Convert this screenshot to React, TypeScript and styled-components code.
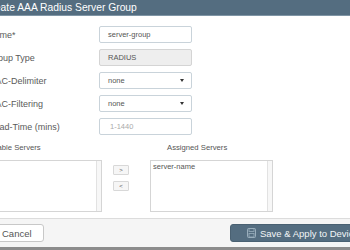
import React from "react";
import styled, { createGlobalStyle } from "styled-components";
import { RotateCcw } from "lucide-react";

const GlobalStyle = createGlobalStyle`
  html, body {
    margin: 0;
    padding: 0;
    background: #fff;
    overflow: hidden;
  }
  body {
    font-family: "Liberation Sans", Arial, sans-serif;
  }
`;

const Dialog = styled.div`
  width: 420px;
  margin-left: -24px;
  background: #fff;
  display: flex;
  flex-direction: column;
  height: 250px;
`;

const Header = styled.div`
  height: 15px;
  background: #546d80;
  border-bottom: 1px solid #7f95a5;
  color: #fff;
  font-size: 10.3px;
  line-height: 15px;
  padding-left: 8px;
  white-space: nowrap;
`;

const Form = styled.div`
  display: grid;
  grid-template-columns: 111px 93px;
  grid-auto-rows: 17px;
  row-gap: 6px;
  padding: 10px 0 0 12px;
  align-items: center;
`;

const Label = styled.div`
  font-size: 9px;
  color: #5a5a5a;
  white-space: nowrap;
`;

const Field = styled.div<{ $disabled?: boolean }>`
  box-sizing: border-box;
  height: 17px;
  border: 1px solid ${(p) => (p.$disabled ? "#d4d4d4" : "#c9d3da")};
  border-radius: 2px;
  background: ${(p) => (p.$disabled ? "#eeeeee" : "#fff")};
  display: flex;
  align-items: center;
  justify-content: space-between;
  padding: 0 7px 0 8px;
  font-size: 7.5px;
  color: #555;
`;

const Placeholder = styled.span`
  color: #aaa;
  padding-left: 2px;
`;

const Caret = styled.span`
  width: 0;
  height: 0;
  border-left: 2.5px solid transparent;
  border-right: 2.5px solid transparent;
  border-top: 3px solid #333;
`;

const Lists = styled.div`
  display: grid;
  grid-template-columns: 121px 48px 123px;
  padding-left: 5px;
  margin-top: 7px;
`;

const ListLabel = styled.div<{ $indent?: number }>`
  font-size: 7.7px;
  color: #555;
  height: 11px;
  line-height: 11px;
  padding-left: ${(p) => p.$indent || 0}px;
  margin-bottom: 7px;
  white-space: nowrap;
`;

const Column = styled.div`
  display: flex;
  flex-direction: column;
`;

const ListBox = styled.div`
  box-sizing: border-box;
  height: 52px;
  border: 1px solid #d5d5d5;
  border-right: none;
  display: grid;
  grid-template-columns: 1fr 6px;
  font-size: 7.5px;
  color: #555;
`;

const ListItems = styled.div`
  padding: 1px 2px;
`;

const Scroll = styled.div`
  border-left: 1px solid #e2e2e2;
  border-right: 1px solid #d5d5d5;
  background: #f7f7f7;
`;

const MoveButtons = styled.div`
  display: flex;
  flex-direction: column;
  gap: 6px;
  padding-top: 5px;
  margin-left: 11px;
`;

const MoveButton = styled.div`
  box-sizing: border-box;
  width: 16px;
  height: 10px;
  border: 1px solid #d8d8d8;
  background: #f6f6f6;
  border-radius: 1px;
  font-size: 6px;
  color: #555;
  display: flex;
  align-items: center;
  justify-content: center;
`;

const Footer = styled.div`
  margin-top: auto;
  border-top: 1px solid #dcdcdc;
  background: #f5f5f5;
  height: 28px;
  border-bottom: 3px solid #8c8c8c;
  display: flex;
  align-items: center;
  justify-content: space-between;
  padding: 0 0 0 6px;
`;

const Button = styled.div<{ $primary?: boolean }>`
  box-sizing: border-box;
  height: 18px;
  border-radius: 3px;
  display: flex;
  align-items: center;
  gap: 4px;
  font-size: 9.5px;
  white-space: nowrap;
  border: 1px solid ${(p) => (p.$primary ? "#4a6172" : "#c8c8c8")};
  background: ${(p) => (p.$primary ? "#546d80" : "#fff")};
  color: ${(p) => (p.$primary ? "#f2f5f7" : "#555")};
  padding: ${(p) => (p.$primary ? "0 10px 0 16px" : "0 11px 0 6px")};
  width: ${(p) => (p.$primary ? "166px" : "auto")};
`;

const Floppy = () => (
  <svg width="9" height="10" viewBox="0 0 9 10">
    <rect x="0.5" y="0.5" width="8" height="9" rx="1" fill="none" stroke="#9aaebc" strokeWidth="1" />
    <rect x="2" y="0.5" width="5" height="3" fill="none" stroke="#9aaebc" strokeWidth="0.8" />
    <rect x="2" y="5.5" width="5" height="3.5" fill="none" stroke="#9aaebc" strokeWidth="0.8" />
  </svg>
);

const App: React.FC = () => {
  return (
    <>
      <GlobalStyle />
      <Dialog>
        <Header>Create AAA Radius Server Group</Header>
        <Form>
          <Label>Name*</Label>
          <Field>server-group</Field>
          <Label>Group Type</Label>
          <Field $disabled>RADIUS</Field>
          <Label>MAC-Delimiter</Label>
          <Field>
            none
            <Caret />
          </Field>
          <Label>MAC-Filtering</Label>
          <Field>
            none
            <Caret />
          </Field>
          <Label>Dead-Time (mins)</Label>
          <Field>
            <Placeholder>1-1440</Placeholder>
          </Field>
        </Form>
        <Lists>
          <Column>
            <ListLabel>Available Servers</ListLabel>
            <ListBox>
              <ListItems />
              <Scroll />
            </ListBox>
          </Column>
          <Column>
            <ListLabel>&nbsp;</ListLabel>
            <MoveButtons>
              <MoveButton>&gt;</MoveButton>
              <MoveButton>&lt;</MoveButton>
            </MoveButtons>
          </Column>
          <Column>
            <ListLabel $indent={17}>Assigned Servers</ListLabel>
            <ListBox>
              <ListItems>server-name</ListItems>
              <Scroll />
            </ListBox>
          </Column>
        </Lists>
        <Footer>
          <Button>
            <RotateCcw size={9} strokeWidth={1.5} />
            Cancel
          </Button>
          <Button $primary>
            <Floppy />
            Save &amp; Apply to Device
          </Button>
        </Footer>
      </Dialog>
    </>
  );
};

export default App;
